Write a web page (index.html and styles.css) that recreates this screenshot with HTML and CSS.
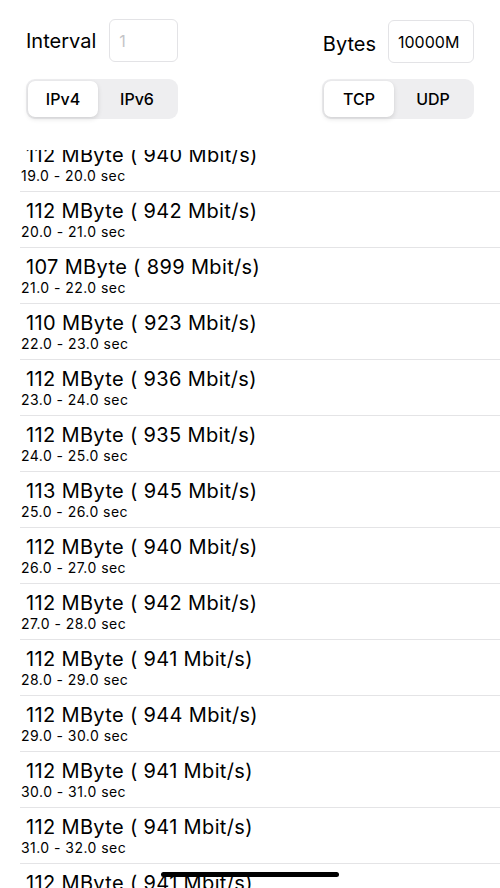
FILE: index.html
```html
<!DOCTYPE html>
<html lang="en">
<head>
<meta charset="utf-8">
<title>iPerf</title>
<link rel="stylesheet" href="styles.css">
</head>
<body>
<div class="screen">
  <header class="controls">
    <div class="field-row">
      <div class="field">
        <span class="label">Interval</span>
        <div class="input input-interval placeholder">1</div>
      </div>
      <div class="field field-bytes">
        <span class="label label-bytes">Bytes</span>
        <div class="input input-bytes">10000M</div>
      </div>
    </div>
    <div class="seg-row">
      <div class="segmented">
        <div class="seg selected">IPv4</div>
        <div class="seg">IPv6</div>
      </div>
      <div class="segmented">
        <div class="seg selected">TCP</div>
        <div class="seg">UDP</div>
      </div>
    </div>
  </header>
  <main class="list">
    <div class="list-inner">
      <div class="row"><div class="title">112 MByte ( 940 Mbit/s)</div><div class="sub">19.0 - 20.0 sec</div></div>
      <div class="row"><div class="title">112 MByte ( 942 Mbit/s)</div><div class="sub">20.0 - 21.0 sec</div></div>
      <div class="row"><div class="title">107 MByte ( 899 Mbit/s)</div><div class="sub">21.0 - 22.0 sec</div></div>
      <div class="row"><div class="title">110 MByte ( 923 Mbit/s)</div><div class="sub">22.0 - 23.0 sec</div></div>
      <div class="row"><div class="title">112 MByte ( 936 Mbit/s)</div><div class="sub">23.0 - 24.0 sec</div></div>
      <div class="row"><div class="title">112 MByte ( 935 Mbit/s)</div><div class="sub">24.0 - 25.0 sec</div></div>
      <div class="row"><div class="title">113 MByte ( 945 Mbit/s)</div><div class="sub">25.0 - 26.0 sec</div></div>
      <div class="row"><div class="title">112 MByte ( 940 Mbit/s)</div><div class="sub">26.0 - 27.0 sec</div></div>
      <div class="row"><div class="title">112 MByte ( 942 Mbit/s)</div><div class="sub">27.0 - 28.0 sec</div></div>
      <div class="row"><div class="title">112 MByte ( 941 Mbit/s)</div><div class="sub">28.0 - 29.0 sec</div></div>
      <div class="row"><div class="title">112 MByte ( 944 Mbit/s)</div><div class="sub">29.0 - 30.0 sec</div></div>
      <div class="row"><div class="title">112 MByte ( 941 Mbit/s)</div><div class="sub">30.0 - 31.0 sec</div></div>
      <div class="row"><div class="title">112 MByte ( 941 Mbit/s)</div><div class="sub">31.0 - 32.0 sec</div></div>
      <div class="row"><div class="title">112 MByte ( 941 Mbit/s)</div><div class="sub">32.0 - 33.0 sec</div></div>
    </div>
  </main>
  <div class="home-indicator"></div>
</div>
</body>
</html>
```
FILE: styles.css
```css
html, body {
  margin: 0;
  padding: 0;
  background: #ffffff;
}
body {
  font-family: Inter, "Liberation Sans", sans-serif;
  color: #000;
}
.screen {
  position: relative;
  width: 500px;
  height: 888px;
  overflow: hidden;
  display: flex;
  flex-direction: column;
}
.controls {
  padding: 19px 26px 0 26px;
  height: 131px;
  box-sizing: border-box;
  flex: none;
}
.field-row {
  display: flex;
  justify-content: space-between;
  align-items: flex-start;
  height: 44px;
}
.field {
  display: flex;
  align-items: center;
  gap: 13px;
}
.field-bytes {
  margin-top: 1px;
  gap: 12px;
}
.label {
  font-size: 20px;
  position: relative;
}
.label-bytes {
  top: 2px;
}
.input {
  box-sizing: border-box;
  height: 43px;
  border: 1px solid #e3e3e6;
  border-radius: 6px;
  font-size: 16px;
  display: flex;
  align-items: center;
  padding-left: 9px;
}
.input-interval {
  width: 69px;
}
.input-bytes {
  width: 86px;
}
.placeholder {
  color: #c4c4c7;
}
.seg-row {
  display: flex;
  justify-content: space-between;
  margin-top: 16px;
}
.segmented {
  box-sizing: border-box;
  width: 152px;
  height: 40px;
  padding: 2px;
  border-radius: 9px;
  background: #eeeef0;
  display: grid;
  grid-template-columns: 70px 1fr;
}
.seg {
  display: flex;
  align-items: center;
  justify-content: center;
  font-size: 16px;
  font-weight: 500;
}
.seg.selected {
  background: #fff;
  border-radius: 7px;
  box-shadow: 0 2px 5px rgba(0,0,0,0.12), 0 0 1px rgba(0,0,0,0.06);
}
.list {
  flex: 1;
  overflow: hidden;
  margin-top: 19px;
}
.list-inner {
  margin-top: -14px;
}
.row {
  box-sizing: border-box;
  height: 56px;
  margin-left: 20px;
  padding-top: 7px;
  border-bottom: 1px solid #e4e4e6;
}
.title {
  font-size: 20px;
  line-height: 24px;
  padding-left: 6px;
  letter-spacing: 0.35px;
}
.sub {
  font-size: 14px;
  line-height: 18px;
  padding-left: 1px;
  letter-spacing: 0.45px;
}
.home-indicator {
  position: absolute;
  left: 161px;
  top: 872px;
  width: 178px;
  height: 5px;
  border-radius: 3px;
  background: #000;
}
```
